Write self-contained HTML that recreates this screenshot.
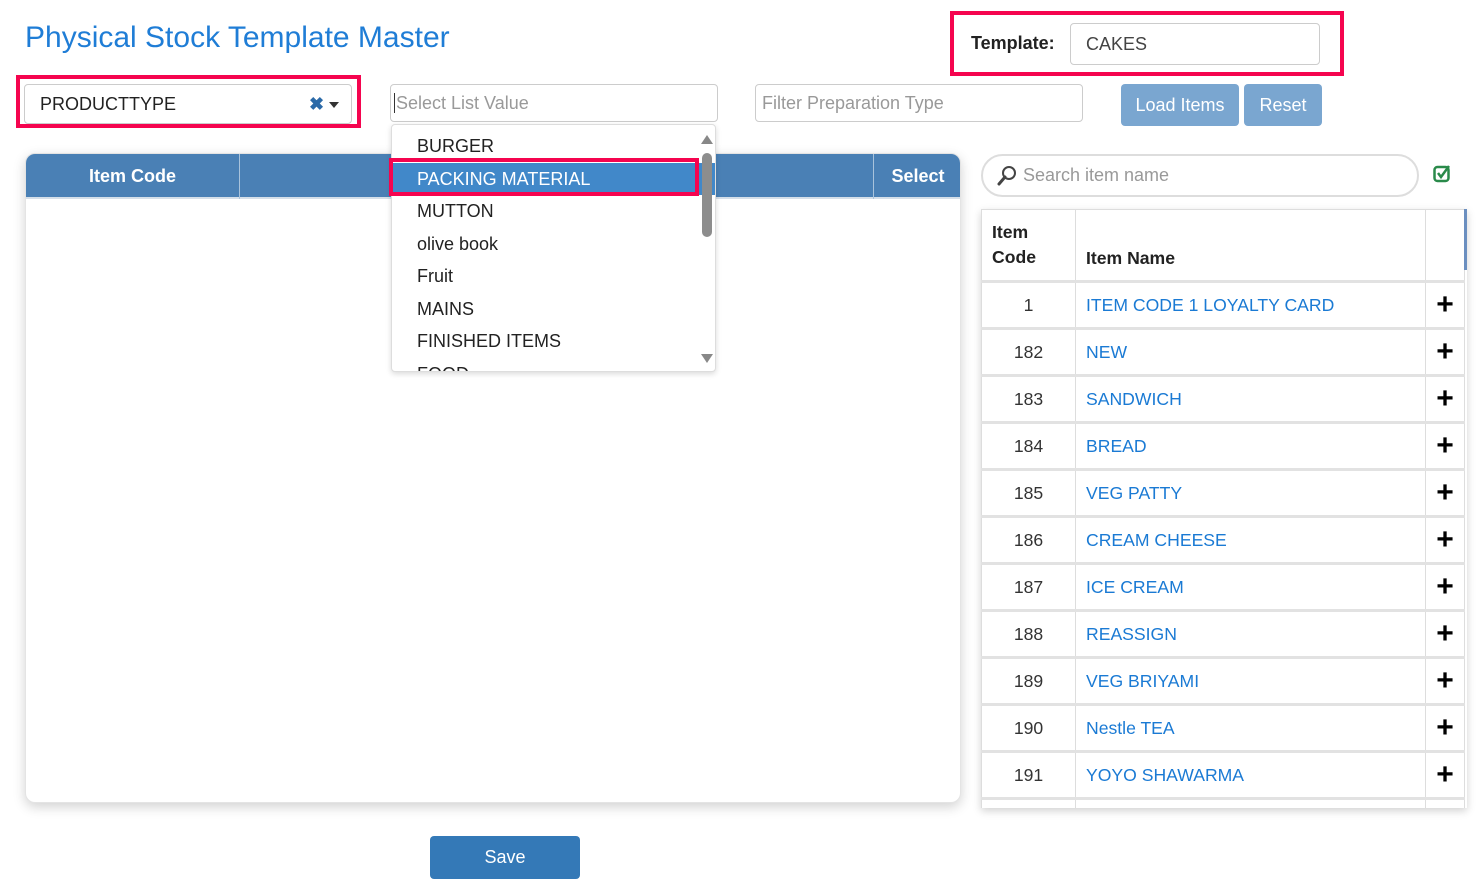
<!DOCTYPE html>
<html><head><style>
*{box-sizing:border-box;margin:0;padding:0}
body{width:1482px;height:890px;background:#fff;font-family:"Liberation Sans",sans-serif;position:relative;overflow:hidden;color:#333}
.a{position:absolute}
.inp{position:absolute;border:1px solid #ccc;border-radius:4px;background:#fff;font-size:18px;padding-left:6px;display:flex;align-items:center}
.ph{color:#999}
.red{position:absolute;border:4px solid #f5044f}
.btn{position:absolute;background:#7aa6d0;color:#fff;border-radius:4px;font-size:18px;display:flex;align-items:center;justify-content:center}
.dd div{height:32.5px;line-height:32.5px;padding-left:25px;font-size:18px;color:#222}
table{border-collapse:collapse}
td{border:1px solid #ddd;border-top:3px solid #e2e2e2;height:47px;font-size:17.6px}
td.c{text-align:center;color:#333}
td.n{color:#1a7ad4;padding-left:10px}
td.p{text-align:center;font-weight:bold;font-size:30px;color:#000;line-height:20px}
</style></head><body>
<div class="a" style="left:25px;top:21px;font-size:30px;color:#1f7dd6">Physical Stock Template Master</div>

<div class="red" style="left:950px;top:11px;width:394px;height:65px"></div>
<div class="a" style="left:971px;top:33px;font-size:18px;font-weight:bold;color:#222">Template:</div>
<div class="inp" style="left:1070px;top:23px;width:250px;height:42px;padding-left:15px;color:#444">CAKES</div>

<div class="red" style="left:16px;top:75px;width:345px;height:53px"></div>
<div class="inp" style="left:24px;top:84px;width:328px;height:40px;padding-left:15px;color:#222">PRODUCTTYPE<span style="position:absolute;left:284px;color:#2b6aa8;font-weight:bold;font-size:18px">✖</span><svg style="position:absolute;left:304px;top:17px" width="10" height="6"><path d="M0 0h10L5 6z" fill="#333"/></svg></div>

<div class="inp ph" style="left:390px;top:84px;width:328px;height:38px;padding-left:3px"><span style="border-left:1px solid #333;height:20px;margin-right:1px"></span>Select List Value</div>
<div class="inp ph" style="left:755px;top:84px;width:328px;height:38px">Filter Preparation Type</div>
<div class="btn" style="left:1121px;top:84px;width:118px;height:42px">Load Items</div>
<div class="btn" style="left:1244px;top:84px;width:78px;height:42px">Reset</div>

<!-- left panel -->
<div class="a" style="left:25px;top:153px;width:936px;height:650px;border-radius:10px;background:#fff;box-shadow:0 4px 12px rgba(0,0,0,.18);overflow:hidden;border:1px solid #e4e4e4">
 <div style="height:45px;background:#4a80b5;border-bottom:2px solid #d5dfe9;position:relative;color:#fff;font-weight:bold;font-size:18px">
  <div class="a" style="left:0;width:213px;top:12px;text-align:center">Item Code</div>
  <div class="a" style="left:213px;top:0;width:1px;height:45px;background:#a9c3dc"></div>
  <div class="a" style="left:847px;top:0;width:1px;height:45px;background:#a9c3dc"></div>
  <div class="a" style="left:848px;width:88px;top:12px;text-align:center">Select</div>
 </div>
</div>

<!-- dropdown -->
<div class="a dd" style="left:391px;top:124px;width:325px;height:248px;background:#fff;border:1px solid #ddd;border-radius:4px;box-shadow:0 2px 6px rgba(0,0,0,.15);overflow:hidden;padding-top:5px">
 <div>BURGER</div>
 <div style="background:#4188c9;color:#fff">PACKING MATERIAL</div>
 <div>MUTTON</div><div>olive book</div><div>Fruit</div><div>MAINS</div><div>FINISHED ITEMS</div><div>FOOD</div>
 <svg class="a" style="left:309px;top:10px" width="12" height="9"><path d="M0 9h12L6 0z" fill="#888"/></svg>
 <span class="a" style="left:310px;top:28px;width:10px;height:84px;background:#8d8d8d;border-radius:5px;padding:0"></span>
 <svg class="a" style="left:309px;top:229px" width="12" height="9"><path d="M0 0h12L6 9z" fill="#888"/></svg>
</div>
<div class="red" style="left:389px;top:158px;width:310px;height:38px"></div>

<!-- search -->
<div class="a" style="left:981px;top:154px;width:438px;height:43px;border:2px solid #ddd;border-radius:22px;display:flex;align-items:center;padding-left:40px;font-size:18px;color:#999">Search item name
 <svg class="a" style="left:13px;top:9px" width="22" height="22" viewBox="0 0 22 22"><circle cx="13" cy="8" r="6" fill="none" stroke="#444" stroke-width="2"/><path d="M9 12L3 19" stroke="#444" stroke-width="3" stroke-linecap="round"/></svg></div>
<svg class="a" style="left:1433px;top:164px" width="18" height="20" viewBox="0 0 18 20"><rect x="1.5" y="3" width="14" height="14" rx="3" fill="none" stroke="#2a8a4a" stroke-width="2.5"/><path d="M5 9l3 4 8-11" fill="none" stroke="#2a8a4a" stroke-width="2.5"/></svg>

<!-- right table -->
<div class="a" style="left:981px;top:209px;width:486px;height:599px;overflow:hidden;box-shadow:0 3px 8px rgba(0,0,0,.18);background:#fff">
<table style="width:484px">
<tr><td style="width:94px;height:72px;border-top:1px solid #ddd;font-weight:bold;color:#222;padding-left:10px;line-height:25px;vertical-align:middle">Item<br>Code</td><td style="width:350px;border-top:1px solid #ddd;font-weight:bold;color:#222;padding:26px 0 0 10px">Item Name</td><td style="border-top:1px solid #ddd"></td></tr>
<tr><td class="c">1</td><td class="n">ITEM CODE 1 LOYALTY CARD</td><td class="p">+</td></tr>
<tr><td class="c">182</td><td class="n">NEW</td><td class="p">+</td></tr>
<tr><td class="c">183</td><td class="n">SANDWICH</td><td class="p">+</td></tr>
<tr><td class="c">184</td><td class="n">BREAD</td><td class="p">+</td></tr>
<tr><td class="c">185</td><td class="n">VEG PATTY</td><td class="p">+</td></tr>
<tr><td class="c">186</td><td class="n">CREAM CHEESE</td><td class="p">+</td></tr>
<tr><td class="c">187</td><td class="n">ICE CREAM</td><td class="p">+</td></tr>
<tr><td class="c">188</td><td class="n">REASSIGN</td><td class="p">+</td></tr>
<tr><td class="c">189</td><td class="n">VEG BRIYAMI</td><td class="p">+</td></tr>
<tr><td class="c">190</td><td class="n">Nestle TEA</td><td class="p">+</td></tr>
<tr><td class="c">191</td><td class="n">YOYO SHAWARMA</td><td class="p">+</td></tr>
<tr><td class="c"></td><td class="n"></td><td class="p"></td></tr>
</table>
<div class="a" style="left:483px;top:0;width:3px;height:61px;background:#6b8fc0"></div>
</div>

<div class="btn" style="left:430px;top:836px;width:150px;height:43px;background:#3479b7">Save</div>
</body></html>
